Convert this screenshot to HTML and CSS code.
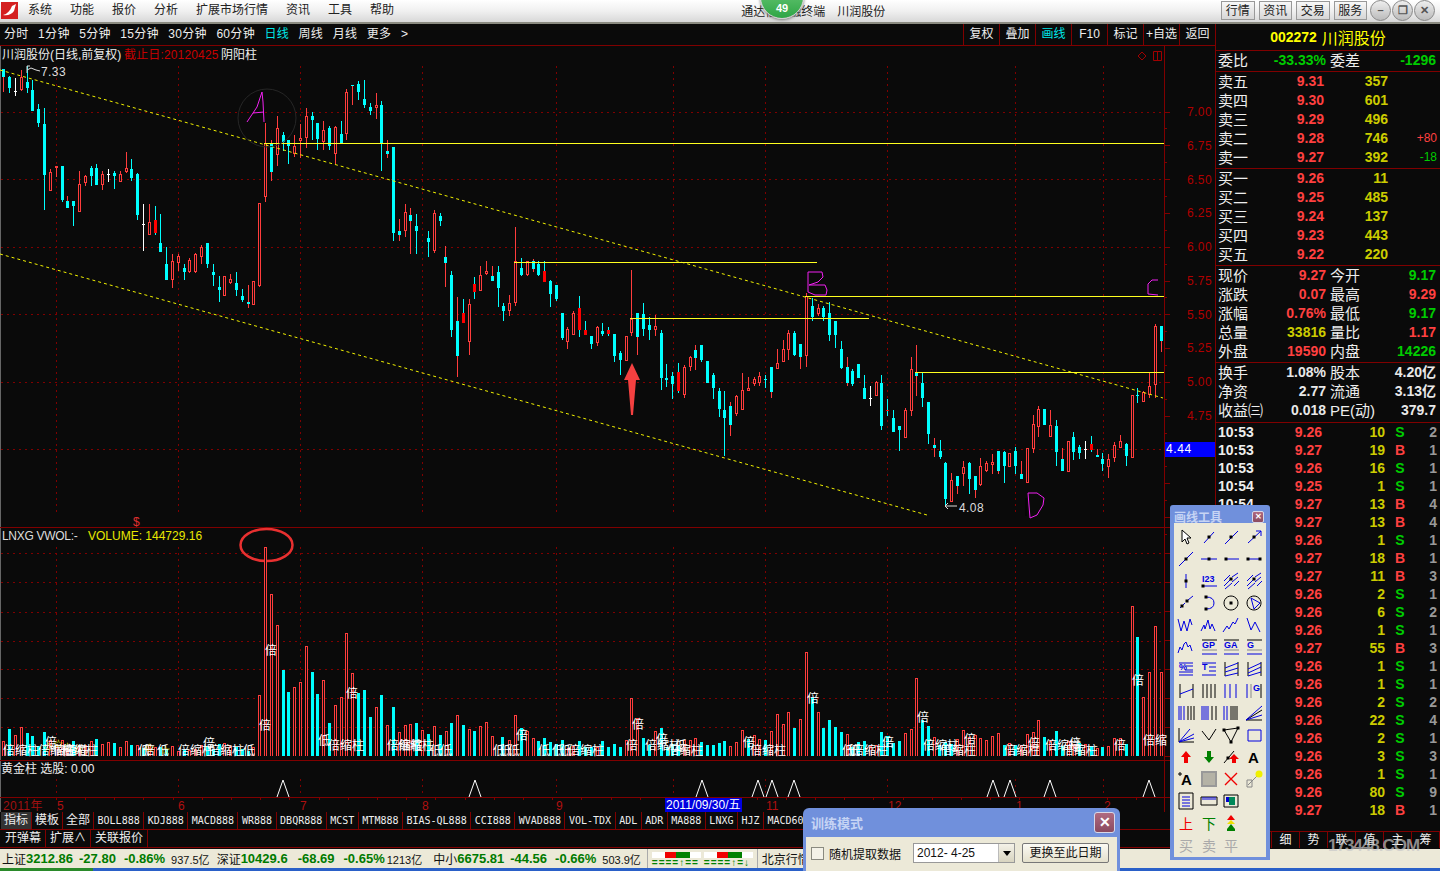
FILE: index.html
```html
<!DOCTYPE html>
<html lang="zh-CN">
<head>
    <meta charset="UTF-8">
    <title>通达信金融终端 川润股份</title>
    <link rel="stylesheet" href="styles.css">
</head>
<body>

    <!-- Title bar -->
    <div class="titlebar">
        <div class="logo"><svg width="17" height="17" viewBox="0 0 17 17"><rect width="17" height="17" fill="#d42020"/><path d="M2 13C6 12 9 9 11 4l4-2-2 7c-2 3-6 5-11 4z" fill="#fff"/></svg></div>
        <ul class="menu">
            <li>系统</li><li>功能</li><li>报价</li><li>分析</li><li>扩展市场行情</li><li>资讯</li><li>工具</li><li>帮助</li>
        </ul>
        <div class="app-title">通达信金融终端<span class="stock-name">川润股份</span></div>
        <div class="title-tabs">
            <span>行情</span><span>资讯</span><span>交易</span><span>服务</span>
        </div>
        <div class="win-btns">
            <span>&#8211;</span><span>&#10064;</span><span>&#10005;</span>
        </div>
    </div>
    <div class="badge">49</div>

    <div class="workspace">
        <!-- Chart column -->
        <div class="chart-col">
            <div class="toolbar">
                <div class="periods">
                    <span>分时</span><span>1分钟</span><span>5分钟</span><span>15分钟</span><span>30分钟</span><span>60分钟</span>
                    <span class="on">日线</span><span>周线</span><span>月线</span><span>更多</span><span>&gt;</span>
                </div>
                <div class="tool-cells">
                    <span>复权</span><span>叠加</span><span class="on">画线</span><span>F10</span><span>标记</span><span>+自选</span><span>返回</span>
                </div>
            </div>
            <svg id="plot" width="1215" height="766" viewBox="0 46 1215 766"></svg>
            <div class="tabs">
                <span class="cn active">指标</span><span class="cn">模板</span><span class="cn">全部</span><span>BOLL888</span><span>KDJ888</span><span>MACD888</span><span>WR888</span><span>DBQR888</span><span>MCST</span><span>MTM888</span><span>BIAS-QL888</span><span>CCI888</span><span>WVAD888</span><span>VOL-TDX</span><span>ADL</span><span>ADR</span><span>MA888</span><span>LNXG</span><span>HJZ</span><span>MACD60</span>
            </div>
            <div class="tabs">
                <span class="cn wide">开弹幕</span><span class="cn wide">扩展∧</span><span class="cn wide">关联报价</span>
            </div>
        </div>

        <!-- Quote panel -->
        <div class="quote-panel">
            <div class="q-head"><b>002272</b><span>川润股份</span></div>
            <div class="q-section ratio">
                <div class="q-row">
                    <div class="q-cell"><i>委比</i><span class="green">-33.33%</span></div>
                    <div class="q-cell"><i>委差</i><span class="green">-1296</span></div>
                </div>
            </div>
            <div class="q-section">
                <div class="book-row"><i>卖五</i><span class="red">9.31</span><span class="yellow">357</span><em></em></div>
                <div class="book-row"><i>卖四</i><span class="red">9.30</span><span class="yellow">601</span><em></em></div>
                <div class="book-row"><i>卖三</i><span class="red">9.29</span><span class="yellow">496</span><em></em></div>
                <div class="book-row"><i>卖二</i><span class="red">9.28</span><span class="yellow">746</span><em class="red">+80</em></div>
                <div class="book-row"><i>卖一</i><span class="red">9.27</span><span class="yellow">392</span><em class="green">-18</em></div>
            </div>
            <div class="q-section">
                <div class="book-row"><i>买一</i><span class="red">9.26</span><span class="yellow">11</span><em></em></div>
                <div class="book-row"><i>买二</i><span class="red">9.25</span><span class="yellow">485</span><em></em></div>
                <div class="book-row"><i>买三</i><span class="red">9.24</span><span class="yellow">137</span><em></em></div>
                <div class="book-row"><i>买四</i><span class="red">9.23</span><span class="yellow">443</span><em></em></div>
                <div class="book-row"><i>买五</i><span class="red">9.22</span><span class="yellow">220</span><em></em></div>
            </div>
            <div class="q-section">
                <div class="q-row">
                    <div class="q-cell"><i>现价</i><span class="red">9.27</span></div>
                    <div class="q-cell"><i>今开</i><span class="green">9.17</span></div>
                </div>
                <div class="q-row">
                    <div class="q-cell"><i>涨跌</i><span class="red">0.07</span></div>
                    <div class="q-cell"><i>最高</i><span class="red">9.29</span></div>
                </div>
                <div class="q-row">
                    <div class="q-cell"><i>涨幅</i><span class="red">0.76%</span></div>
                    <div class="q-cell"><i>最低</i><span class="green">9.17</span></div>
                </div>
                <div class="q-row">
                    <div class="q-cell"><i>总量</i><span class="yellow">33816</span></div>
                    <div class="q-cell"><i>量比</i><span class="red">1.17</span></div>
                </div>
                <div class="q-row">
                    <div class="q-cell"><i>外盘</i><span class="red">19590</span></div>
                    <div class="q-cell"><i>内盘</i><span class="green">14226</span></div>
                </div>
            </div>
            <div class="q-section finance">
                <div class="q-row">
                    <div class="q-cell"><i>换手</i><span>1.08%</span></div>
                    <div class="q-cell"><i>股本</i><span>4.20亿</span></div>
                </div>
                <div class="q-row">
                    <div class="q-cell"><i>净资</i><span>2.77</span></div>
                    <div class="q-cell"><i>流通</i><span>3.13亿</span></div>
                </div>
                <div class="q-row">
                    <div class="q-cell"><i>收益㈢</i><span>0.018</span></div>
                    <div class="q-cell"><i>PE(动)</i><span>379.7</span></div>
                </div>
            </div>
            <div class="ticks" id="ticks"></div>
            <div class="panel-tabs">
                <span>笔</span><span>价</span><span>细</span><span>势</span><span>联</span><span>值</span><span>主</span><span>筹</span>
            </div>
            <div class="watermark">173448.COM</div>
        </div>
    </div>

    <!-- Status bar -->
    <div class="statusbar">
        <span class="idx">上证</span><b class="first">3212.86</b><b>-27.80</b><b class="last">-0.86%</b><span class="amt">937.5亿</span>
        <span class="idx">深证</span><b class="first far">10429.6</b><b class="mid">-68.69</b><b class="near">-0.65%</b><span class="amt far">1213亿</span>
        <span class="idx">中小</span><b class="first">6675.81</b><b>-44.56</b><b class="last">-0.66%</b><span class="amt">503.9亿</span>
        <div class="mini-group">
            <div class="mini"><div class="mini-bar"><s class="mr"></s><s class="mg"></s></div><div class="mini-txt">====↑==</div></div>
            <div class="mini"><div class="mini-bar"><s class="mr"></s><s class="mg"></s></div><div class="mini-txt">====↑=↓</div></div>
        </div>
        <span class="market">北京行情</span>
    </div>
    <div class="taskstrip"></div>

    <!-- Floating drawing tools -->
    <div class="draw-tools">
        <div class="win-title"><span>画线工具</span><div class="win-close small">&#10005;</div></div>
        <div class="tool-grid" id="toolGrid"></div>
    </div>

    <!-- Training dialog -->
    <div class="train-dialog">
        <div class="win-title"><span>训练模式</span><div class="win-close">&#10005;</div></div>
        <div class="train-body">
            <div class="check"></div>
            <span class="check-label">随机提取数据</span>
            <div class="combo"><span>2012- 4-25</span><div class="combo-btn"></div></div>
            <div class="train-btn">更换至此日期</div>
        </div>
    </div>

    <script src="chart.js"></script>
</body>
</html>
```

FILE: styles.css
```css
/* General Styles */
* {
    margin: 0;
    padding: 0;
    box-sizing: border-box;
    font-family: "Liberation Sans", "Noto Sans CJK SC", sans-serif;
}

body {
    width: 1440px;
    height: 871px;
    overflow: hidden;
    background: #0a0a0a;
    color: #eee;
    font-size: 12px;
    position: relative;
}

/* Title bar */
.titlebar {
    height: 24px;
    display: flex;
    align-items: center;
    background: linear-gradient(#ffffff, #f0f0f0 50%, #d8d8d8);
    border-bottom: 2px solid #8a8a80;
    color: #222;
    padding-bottom: 2px;
}

.logo {
    width: 18px;
    margin-left: 1px;
    height: 17px;
}

.menu {
    list-style: none;
    display: flex;
}

.menu li {
    padding: 0 9px;
    line-height: 20px;
}

.app-title {
    margin-left: 338px;
    white-space: nowrap;
}

.stock-name {
    margin-left: 12px;
}

.title-tabs {
    display: flex;
    gap: 4px;
    margin-left: auto;
}

.title-tabs span {
    width: 33.5px;
    height: 19px;
    line-height: 18px;
    text-align: center;
    background: linear-gradient(#f8f8f8, #d6d6d6);
    border: 1px solid #999;
}

.win-btns {
    display: flex;
    gap: 1px;
    margin-left: 3px;
    margin-right: 5px;
}

.win-btns span {
    width: 21px;
    height: 21px;
    border-radius: 50%;
    border: 1px solid #888;
    background: linear-gradient(#eee, #bbb);
    text-align: center;
    line-height: 19px;
    font-size: 11px;
    font-weight: bold;
    color: #555;
}

.badge {
    position: absolute;
    left: 760px;
    top: -25px;
    width: 44px;
    height: 44px;
    border-radius: 50%;
    background: linear-gradient(#7fd487, #2ea545);
    border: 1px solid #cfcfcf;
    box-shadow: 0 1px 3px #777;
    color: #fff;
    font-weight: bold;
    font-size: 11px;
    text-align: center;
    padding-top: 25px;
    line-height: 14px;
}

.workspace {
    display: flex;
    height: 825px;
}

/* Chart */
.chart-col {
    width: 1215px;
}

.toolbar {
    height: 22px;
    display: flex;
    justify-content: space-between;
    border-bottom: 1px solid #800000;
}

.periods {
    display: flex;
    gap: 9.5px;
    padding-left: 4px;
    line-height: 20px;
    letter-spacing: 0.3px;
}

.on {
    color: #00e8e8;
}

.tool-cells {
    display: flex;
}

.tool-cells span {
    width: 36px;
    text-align: center;
    line-height: 20px;
    border-left: 1px solid #800000;
}

#plot {
    display: block;
}

#plot text {
    font-size: 12px;
}

.tabs {
    height: 18px;
    display: flex;
    padding-left: 1px;
    border-bottom: 1px solid #800000;
    overflow: hidden;
}

.tabs span {
    padding: 0 3.5px;
    border-right: 1px solid #800000;
    line-height: 17px;
    font-family: "DejaVu Sans Mono", monospace;
    font-size: 10px;
    white-space: nowrap;
}

.tabs .cn {
    font-family: "Liberation Sans", "Noto Sans CJK SC", sans-serif;
    font-size: 12px;
    padding: 0 3px;
}

.tabs .wide {
    padding: 0 4px;
}

.tabs .active {
    background: #333;
}

/* Quote panel */
.quote-panel {
    width: 225px;
    border-left: 1px solid #800000;
    position: relative;
    font-size: 14px;
    font-weight: bold;
}

.q-head {
    height: 27px;
    display: flex;
    justify-content: center;
    align-items: center;
    gap: 5px;
    color: #ffff00;
    border-bottom: 1px solid #800000;
}

.q-head span {
    font-size: 16px;
    font-weight: normal;
}

.q-section {
    padding-bottom: 1px;
    border-bottom: 1px solid #800000;
}

.finance {
    padding-bottom: 2px;
    color: #e8e8e8;
}

.q-row {
    display: flex;
    height: 19px;
    line-height: 19px;
}

.q-cell {
    width: 112px;
    display: flex;
    justify-content: space-between;
    padding: 0 2px;
}

.q-cell + .q-cell {
    padding-right: 4px;
}

i {
    font-style: normal;
    font-weight: normal;
    font-size: 15px;
    color: #eee;
    white-space: nowrap;
}

.book-row {
    display: grid;
    grid-template-columns: 34px 72px 64px 49px;
    height: 19px;
    line-height: 19px;
    padding-left: 2px;
}

.book-row span,
.book-row em {
    text-align: right;
}

.book-row em {
    font-style: normal;
    font-weight: normal;
    font-size: 12px;
}

.red {
    color: #ff4040;
}

.green {
    color: #00cc00;
}

.yellow {
    color: #cccc00;
}

.ticks {
    height: 408px;
}

.tick-row {
    display: grid;
    grid-template-columns: 48px 56px 63px 30px 22px;
    height: 18px;
    line-height: 18px;
    padding-left: 2px;
}

.tick-row span {
    text-align: right;
}

.tick-row .side {
    text-align: center;
}

.tick-row .count {
    color: #999;
}

.panel-tabs {
    display: flex;
    height: 17px;
    border-top: 1px solid #800000;
    font-size: 12px;
    font-weight: normal;
    line-height: 16px;
}

.panel-tabs span {
    width: 28px;
    text-align: center;
    border-right: 1px solid #800000;
}

.watermark {
    position: absolute;
    left: 112px;
    top: 812px;
    font-size: 17px;
    font-weight: bold;
    color: rgba(200, 200, 200, 0.7);
    letter-spacing: -1px;
}

/* Status bar */
.statusbar {
    height: 19px;
    background: #ece9d8;
    color: #111;
    display: flex;
    align-items: center;
    padding-left: 2px;
    white-space: nowrap;
    overflow: hidden;
}

.statusbar b {
    color: #007a00;
    font-size: 13px;
    margin-right: 8px;
}

.statusbar b.first {
    margin-right: 6px;
}

.statusbar b.last {
    margin-right: 6px;
}

.statusbar b.far {
    margin-right: 10px;
}

.statusbar b.mid {
    margin-right: 9px;
}

.statusbar b.near {
    margin-right: 2px;
}

.amt {
    font-size: 11px;
    margin-right: 7px;
}

.amt.far {
    margin-right: 11px;
}

.mini-group {
    display: flex;
    gap: 3px;
    margin-left: -1px;
    padding: 3px 4px 0;
    height: 19px;
    border-left: 1px solid #aaa;
    border-right: 1px solid #aaa;
}

.mini {
    width: 49px;
}

.mini-bar {
    height: 6px;
    display: flex;
    background: #fff;
    padding-left: 13px;
}

.mr {
    width: 11px;
    background: #f00000;
}

.mg {
    width: 14px;
    background: #008000;
}

.mini-txt {
    font-size: 10px;
    line-height: 9px;
    font-weight: bold;
    color: #008000;
    letter-spacing: 1px;
}

.market {
    margin-left: 4px;
}

.taskstrip {
    height: 3px;
    background: linear-gradient(90deg, #2a8a2a 93px, #2a60c8 93px);
}

/* Floating windows */
.win-title {
    display: flex;
    justify-content: space-between;
    align-items: center;
    color: #c6d4f4;
    font-weight: bold;
}

.win-close {
    width: 21px;
    height: 21px;
    background: linear-gradient(#b06a80, #8a4a60);
    border: 1px solid #d8d8e8;
    border-radius: 3px;
    color: #fff;
    font-size: 14px;
    line-height: 19px;
    text-align: center;
}

.win-close.small {
    width: 12px;
    height: 12px;
    font-size: 8px;
    line-height: 10px;
    border-radius: 2px;
}

.draw-tools {
    position: absolute;
    left: 1170px;
    top: 505px;
    width: 100px;
    height: 355px;
    background: #7090dc;
    padding: 0 4px 3px;
    border-radius: 3px 3px 0 0;
}

.draw-tools .win-title {
    height: 18px;
    padding: 5px 2px 0 0;
}

.tool-grid {
    height: 334px;
    background: #ece9d8;
    display: grid;
    grid-template-columns: repeat(4, 22.7px);
    grid-auto-rows: 22px;
    padding: 3px 0 0 1px;
}

.tool-grid svg {
    display: block;
    margin: 2px;
}

.tool-grid path {
    fill: none;
    stroke-width: 1;
}

.tool-grid text {
    font-size: 9px;
    font-weight: bold;
}

.tool-grid .k { stroke: #000; }
.tool-grid .b { stroke: #0000e0; }
.tool-grid .g { stroke: #888; }
.tool-grid .r { stroke: #f00000; stroke-width: 1.4; }
.tool-grid .sq { fill: #000; }
.tool-grid .wf { fill: #fff; stroke: #000; }
.tool-grid .rf { fill: #f00000; stroke: none; }
.tool-grid .gf { fill: #008000; stroke: none; }
.tool-grid .yf { fill: #f0e000; stroke: none; }

.train-dialog {
    position: absolute;
    left: 803px;
    top: 808px;
    width: 317px;
    height: 70px;
    background: #7090dc;
    padding: 0 3px;
    border-radius: 6px 6px 0 0;
}

.train-dialog .win-title {
    height: 29px;
    padding: 0 2px 0 5px;
    font-size: 13px;
}

.train-body {
    height: 40px;
    background: #ece9d8;
    color: #111;
    display: flex;
    align-items: flex-start;
    padding: 6px 0 0 5px;
}

.check {
    width: 13px;
    height: 13px;
    margin-top: 4px;
    background: #f4f2e8;
    border: 1px solid #8a8a80;
}

.check-label {
    margin: 2px 0 0 5px;
    width: 84px;
}

.combo {
    width: 102px;
    height: 20px;
    background: #fff;
    border: 1px solid #999;
    display: flex;
    justify-content: space-between;
    line-height: 18px;
    padding-left: 3px;
}

.combo-btn {
    width: 16px;
    background: linear-gradient(#f4f2e8, #d8d4c0);
    border-left: 1px solid #bbb;
    position: relative;
}

.combo-btn::after {
    content: "";
    position: absolute;
    left: 4px;
    top: 7px;
    border: 4px solid transparent;
    border-top: 5px solid #000;
}

.train-btn {
    width: 87px;
    height: 20px;
    margin-left: 7px;
    text-align: center;
    line-height: 18px;
    background: linear-gradient(#fbfaf4, #e4e0cc);
    border: 1px solid #777;
    border-radius: 2px;
}
```

FILE: chart.js
```js
const SVG_NS = "http://www.w3.org/2000/svg";
const plot = document.getElementById("plot");

const RED = "#ff3c3c";
const CYAN = "#00ffff";
const BG = "#0a0a0a";
const GRID = "#800000";

function add(tag, attrs, text) {
    const node = document.createElementNS(SVG_NS, tag);
    for (const key in attrs) node.setAttribute(key, attrs[key]);
    if (text !== undefined) node.textContent = text;
    plot.appendChild(node);
    return node;
}

function rect(x, y, w, h, fill) {
    add("rect", { x, y, width: w, height: h, fill, "shape-rendering": "crispEdges" });
}

function line(x1, y1, x2, y2, stroke, extra) {
    add("line", Object.assign({ x1, y1, x2, y2, stroke, "shape-rendering": "crispEdges" }, extra || {}));
}

function label(x, y, str, fill, extra) {
    add("text", Object.assign({ x, y, fill }, extra || {}), str);
}

// candles: [x, type, high, low, bodyTop, bodyBottom], read off in crop coordinates
const candleGroups = [
    { ox: 0, oy: 60, sx: 3, rows: [
        [10,"cr",27,98,27,52],[28,"c",50,100,52,86],[46,"w",55,108,95,95],[64,"r",30,95,52,90],[82,"c",20,100,66,86],
        [98,"c",60,155,90,155],[115,"c",132,203,148,191],[133,"c",145,450,192,347],[151,"r",327,395,337,395],[169,"r",318,352,318,326],
        [187,"c",318,428,318,420],[203,"cr",408,446,423,446],[221,"c",423,500,423,438],[239,"r",333,458,373,458],[257,"r",345,380,349,369],
        [275,"c",320,380,324,350],[289,"c",312,375,324,375],[307,"r",335,392,343,376],[325,"w",327,366,343,343],[343,"c",335,387,340,348],
        [361,"r",335,368,343,368],[379,"r",277,340,324,338],[394,"c",297,365,327,354],[412,"c",340,480,342,465],[430,"w",432,575,493,493],
        [448,"r",432,527,487,527],[466,"Rc",438,525,480,520],[481,"c",462,576,549,576],[499,"c",562,660,612,660],[517,"r",582,684,604,660],
        [535,"r",582,634,589,609],[553,"c",612,660,624,636],[568,"r",595,640,601,638],[586,"r",580,640,582,638],[604,"r",555,612,562,592],
        [622,"c",549,624,549,612],[640,"c",612,680,636,645],[658,"c",648,726,682,692],[673,"r",648,710,650,710],[691,"r",642,672,657,671],
        [709,"c",638,710,669,692],[727,"c",687,726,708,720],[745,"cr",675,744,726,732],[761,"r",663,735,663,735],[779,"r",430,683,430,678],
        [797,"r",190,428,250,413],[815,"cr",240,363,250,338],[832,"r",170,318,205,287],[850,"c",216,275,226,246],[865,"c",240,312,240,258],
        [883,"r",225,292,258,282],[901,"r",192,295,235,243],[919,"r",145,265,168,235],[937,"c",156,240,168,180],[952,"c",190,270,190,238],
        [970,"r",183,270,211,248],[988,"c",198,272,204,260],[1006,"r",200,312,202,282],[1024,"c",185,250,222,250],[1040,"r",87,240,97,224],
        [1057,"cr",75,135,75,80],[1075,"c",65,120,72,98],[1093,"c",60,145,117,135],[1111,"c",130,167,141,153],[1129,"r",99,177,136,146],
        [1144,"c",124,335,135,254],[1162,"cr",240,295,273,282],[1180,"c",261,543,261,519],[1198,"cr",477,543,513,525],[1216,"r",432,531,457,513],
        [1231,"cr",445,582,467,483],[1249,"c",462,582,498,513]
    ] },
    { ox: 420, oy: 220, sx: 3, rows: [
        [25,"c",33,113,54,68],[43,"r",-30,100,-20,93],[61,"c",-20,20,-10,5],[76,"cr",78,203,111,129],[94,"c",153,353,165,330],
        [112,"cr",232,473,303,410],[130,"Rc",237,310,279,309],[148,"r",237,407,252,368],[163,"Rc",171,237,192,216],[181,"r",138,215,166,215],
        [199,"r",123,165,155,162],[217,"cr",138,183,168,183],[235,"c",138,263,156,204],[250,"c",250,305,258,273],[268,"r",225,290,250,274],
        [286,"r",22,260,125,251],[304,"c",114,168,144,165],[322,"r",123,168,124,167],[340,"cr",117,157,123,147],[355,"c",125,170,132,165],
        [373,"Rc",123,186,153,186],[391,"c",180,263,183,222],[409,"c",195,245,195,237],[427,"c",279,360,279,355],[442,"r",322,387,328,368],
        [460,"r",274,345,280,345],[478,"Rc",228,353,264,332],[496,"Rc",303,347,330,345],[514,"c",348,387,348,372],[532,"r",318,378,322,370],
        [547,"c",310,350,333,342],[565,"Rc",322,348,330,342],[583,"c",342,428,342,408],[601,"c",395,465,400,420],[619,"r",348,423,349,423],
        [634,"r",150,350,297,341],[652,"cr",280,405,280,351],[670,"c",250,348,282,327],[688,"c",292,362,315,330],[706,"r",285,348,319,330],
        [724,"c",331,510,339,474],[739,"c",432,503,474,480],[757,"c",457,537,468,492],[775,"Rc",430,520,457,514],[793,"r",435,534,441,525],
        [811,"r",410,453,412,443],[826,"cr",375,450,390,414],[844,"c",375,428,375,420],[862,"c",423,489,423,489],[880,"c",460,537,465,504],
        [898,"c",505,592,513,567],[913,"c",513,710,570,594],[931,"cr",547,648,558,615],[949,"r",525,590,528,582],[967,"r",460,572,511,572],
        [985,"r",472,515,505,513],[1003,"r",472,500,477,492],[1018,"r",457,500,468,489],[1036,"c",465,505,478,480],[1054,"cr",441,534,441,516],
        [1072,"r",388,447,430,447],[1090,"r",360,426,388,426],[1105,"r",330,420,339,390],[1123,"c",333,408,339,405],[1141,"cr",372,447,372,411]
    ] },
    { ox: 800, oy: 270, sx: 3, rows: [
        [19,"r",70,291,80,260],[37,"c",85,155,108,141],[55,"r",102,140,114,132],[70,"c",108,155,114,141],[88,"c",97,215,129,197],
        [106,"c",153,236,153,197],[124,"c",213,297,237,294],[142,"cr",261,350,291,339],[157,"c",297,350,303,342],[175,"c",282,324,282,324],
        [193,"c",315,387,354,387],[211,"w",350,410,385,385],[229,"r",333,378,336,378],[244,"c",315,480,339,468],[262,"Rc",387,440,420,425],
        [280,"c",420,486,444,486],[298,"c",468,543,468,480],[316,"r",415,504,420,504],[334,"r",262,440,297,423],[349,"cr",225,378,306,318],
        [367,"c",310,411,339,384],[385,"c",396,522,396,492],[403,"cr",504,561,525,534],[421,"c",510,567,543,561],[436,"c",578,705,579,687],
        [454,"r",610,698,630,698],[472,"cr",618,672,618,648],[490,"r",573,648,591,614],[508,"c",576,672,579,627],[526,"cr",618,684,618,660],
        [541,"r",565,648,588,647],[559,"r",573,606,579,605],[577,"r",552,612,576,585],[595,"cr",543,612,543,603],[613,"c",543,639,546,588],
        [628,"r",549,591,549,591],[646,"c",531,612,543,588],[664,"cr",573,627,612,627],[682,"r",534,639,534,639],[700,"r",435,549,462,537],
        [715,"r",408,501,417,471],[733,"c",417,465,417,465],[751,"r",420,501,465,501],[769,"c",450,588,468,546],[787,"cr",534,603,567,603],
        [805,"r",513,606,513,606],[820,"c",486,570,501,546],[838,"c",525,567,531,549],[856,"w",513,567,538,538],[874,"Rc",498,546,522,540],
        [892,"cr",537,561,555,561],[907,"c",549,603,567,582],[925,"r",552,624,567,591],[943,"r",516,576,525,564],[961,"r",495,534,513,534],
        [979,"c",519,588,522,558],[997,"r",375,564,375,564],[1012,"c",354,399,375,378],[1030,"r",363,396,366,396],[1048,"r",309,384,348,375],
        [1066,"r",162,384,168,345],[1084,"cr",168,246,168,213]
    ] }
];

// volume: [x, type, top]
const volumeGroups = [
    { ox: 0, oy: 525, sx: 3, base: 695, rows: [
        [10,"r",648],[28,"c",612],[46,"r",630],[64,"r",606],[82,"c",624],[97,"c",633],[115,"c",663],[133,"c",621],[151,"r",645],[169,"r",660],
        [187,"r",645],[203,"r",675],[221,"c",648],[239,"r",660],[257,"r",660],[275,"r",648],[289,"c",642],[307,"r",657],[325,"r",651],[343,"c",654],
        [361,"r",666],[379,"r",648],[394,"c",660],[412,"r",660],[430,"c",670],[448,"r",660],[466,"r",668],[481,"c",668],[499,"c",672],[517,"r",663],
        [535,"r",678],[553,"c",672],[568,"r",675],[586,"r",672],[604,"r",660],[622,"c",665],[640,"c",672],[658,"c",657],[673,"r",654],[691,"r",663],
        [709,"c",666],[727,"c",672],[745,"c",678],[761,"r",666],[779,"r",510],[797,"r",66],[815,"r",207],[832,"r",300],[850,"c",435],[865,"c",501],
        [883,"r",486],[901,"r",471],[919,"r",363],[937,"c",441],[952,"c",507],[970,"r",465],[988,"c",594],[1006,"r",540],[1024,"r",516],[1040,"r",324],
        [1057,"r",444],[1075,"c",504],[1093,"c",495],[1111,"c",576],[1129,"r",546],[1144,"c",510],[1162,"r",600],[1180,"c",546],[1198,"r",622],[1216,"r",600],
        [1231,"r",597],[1249,"c",594],[1267,"r",615],[1285,"c",627],[1303,"r",603],[1321,"c",630],[1339,"r",618],[1354,"c",594],[1372,"r",570],[1390,"c",600],
        [1408,"r",612],[1423,"c",618],[1441,"r",603],[1459,"r",591],[1477,"r",633]
    ] },
    { ox: 500, oy: 590, sx: 2.34, base: 500, rows: [
        [5,"c",441],[22,"r",450],[36,"r",375],[50,"c",415],[64,"r",423],[78,"r",444],[90,"c",453],[104,"c",444],[118,"c",456],[132,"c",462],
        [146,"c",450],[160,"r",475],[172,"r",468],[186,"c",453],[200,"c",471],[214,"c",471],[228,"r",471],[240,"c",453],[253,"c",471],[267,"c",462],
        [281,"c",471],[296,"r",450],[307,"r",324],[321,"r",384],[335,"c",444],[349,"c",465],[363,"r",423],[377,"c",414],[391,"c",471],[403,"c",462],
        [417,"c",465],[431,"r",450],[445,"r",450],[458,"r",444],[471,"c",456],[485,"c",465],[499,"c",465],[513,"c",459],[525,"c",453],[539,"r",468],
        [553,"r",456],[567,"r",420],[581,"c",447],[595,"r",435],[607,"r",447],[621,"c",450],[635,"r",423],[649,"r",372],[663,"r",402],[675,"r",366],
        [689,"c",414],[703,"r",387],[717,"r",186],[731,"c",321],[745,"r",366],[757,"c",414],[771,"c",390],[785,"c",411],[799,"c",426],[813,"r",432],
        [825,"c",471],[839,"c",456],[853,"c",453],[867,"r",468],[881,"r",465],[893,"c",426],[907,"c",438],[921,"c",459],[935,"c",453],[949,"r",429],
        [963,"r",417],[975,"r",264],[989,"c",390],[1003,"c",408],[1017,"r",441],[1029,"c",465],[1043,"c",456],[1057,"c",462],[1071,"r",447],[1085,"r",420],
        [1099,"r",441],[1113,"r",435],[1125,"r",444],[1139,"r",450],[1153,"r",438],[1167,"r",429],[1181,"c",465],[1193,"r",459],[1207,"c",465],[1221,"r",465],
        [1235,"r",432],[1249,"r",426],[1261,"r",390],[1275,"c",441],[1289,"r",453],[1303,"c",423],[1317,"c",468],[1331,"r",453],[1345,"r",462],[1357,"c",459],
        [1371,"r",462],[1385,"c",468],[1399,"r",474],[1411,"c",471],[1425,"r",468],[1439,"r",444],[1453,"r",444],[1467,"c",462],[1481,"r",48],[1492,"c",141],
        [1506,"r",321],[1520,"r",246],[1534,"r",108],[1548,"r",246]
    ] }
];

// white text marks scattered over the volume bars: [x, baseline, text]
const volumeMarks = [
    [3,755,"倍缩柱"],[38,755,"倍缩柱"],[53,755,"倍缩柱"],[62,755,"倍缩柱"],[45,747,"倍"],[138,755,"低"],[143,755,"倍"],[157,755,"低"],
    [178,755,"倍缩柱"],[203,748,"倍"],[208,755,"倍缩柱"],[243,755,"低"],[259,730,"倍"],[265,655,"倍"],[346,698,"倍"],[318,745,"低"],
    [328,750,"倍缩柱"],[387,750,"倍缩柱"],[398,750,"倍缩柱"],[430,755,"低"],[440,755,"低"],[493,755,"低"],[500,755,"低"],[508,755,"低"],
    [516,740,"倍"],[538,755,"低"],[552,755,"低"],[560,755,"低"],[568,755,"倍缩柱"],[626,750,"倍"],[632,729,"倍"],[645,750,"倍缩柱"],
    [656,744,"倍"],[667,755,"倍缩柱"],[675,750,"低"],[743,747,"倍"],[750,755,"倍缩柱"],[807,703,"倍"],[842,755,"低"],[848,755,"低"],
    [852,755,"倍缩柱"],[882,747,"倍"],[917,722,"倍"],[923,750,"倍缩柱"],[940,755,"倍缩柱"],[964,744,"倍"],[1004,755,"倍缩柱"],[1028,748,"倍"],
    [1045,750,"倍缩柱"],[1062,755,"倍缩柱"],[1069,748,"倍"],[1114,750,"倍"],[1132,685,"倍"],[1143,745,"倍缩"]
];

const stars = [[43,751],[53,748],[62,751],[73,753],[144,752],[160,754]];
const months = [[57,"5"],[178,"6"],[300,"7"],[422,"8"],[556,"9"],[766,"11"],[888,"12"],[1016,"1"],[1104,"2"]];
const gridX = [56,178,300,422,556,673,765,887,1015,1103];
const peaks = [283,475,702,758,772,794,993,1010,1050,1149];

function drawGrid() {
    rect(0, 46, 1, 766, "#666");
    const dots = { "stroke-dasharray": "2 4" };
    [112,179,247,314,382,449,553,582,612,641,669,698,727].forEach(y => line(1, y, 1164, y, GRID, dots));
    gridX.forEach(x => {
        line(x, 66, x, 515, GRID, dots);
        line(x, 547, x, 755, GRID, dots);
        line(x, 779, x, 797, GRID, dots);
    });
    line(0, 527, 1215, 527, GRID);
    line(0, 760, 1215, 760, GRID);
    line(0, 797, 1215, 797, GRID);
    line(1164, 46, 1164, 812, GRID);

    for (let i = 0; i < 26; i++) {
        const y = 112 + i * 16.9;
        line(1164, y, i % 2 ? 1167 : 1170, y, GRID);
    }
    for (let i = 0; i < 8; i++) {
        const y = 553 + i * 29;
        line(1164, y, 1170, y, GRID);
    }
    for (let x = 27; x < 1164; x += 29.2) line(x, 797, x, 800, GRID);

    const prices = ["7.00","6.75","6.50","6.25","6.00","5.75","5.50","5.25","5.00","4.75"];
    prices.forEach((p, i) => label(1212, 116 + i * 33.75, p, "#b00000", { "text-anchor": "end", "letter-spacing": "0.4" }));
    rect(1165, 442, 50, 15, "#0000ff");
    label(1166, 453, "4.44", "#fff", { "letter-spacing": "0.6" });
}

function drawCandles() {
    candleGroups.forEach(g => g.rows.forEach(row => {
        const [zx, type, hi, lo, top, bot] = row;
        const x = Math.floor(g.ox + zx / g.sx);
        const y = z => Math.floor(g.oy + z / 3);
        const bodyH = Math.max(y(bot) - y(top), 1);
        const wick = type === "r" || type === "cr" ? RED : type === "w" ? "#fff" : CYAN;
        rect(x, y(hi), 1, y(lo) - y(hi), wick);
        if (type === "c" || type === "cr") {
            rect(x - 1, y(top), 3, bodyH, CYAN);
        } else if (type === "Rc") {
            rect(x - 1, y(top), 3, bodyH, "#ff0000");
        } else if (type === "w") {
            rect(x - 1, y(top), 3, 1, "#fff");
        } else {
            rect(x - 1, y(top), 3, bodyH, RED);
            if (bodyH > 2) rect(x, y(top) + 1, 1, bodyH - 2, BG);
        }
    }));
}

function drawTrendLines() {
    const dash = { "stroke-dasharray": "3 3", "stroke-width": 1 };
    add("line", Object.assign({ x1: 0, y1: 70, x2: 1163, y2: 398, stroke: "#f0f000" }, dash));
    add("line", Object.assign({ x1: 0, y1: 254, x2: 927, y2: 515, stroke: "#f0f000" }, dash));
    [[264,1164,143],[514,817,262],[630,869,318],[805,1164,296],[915,1164,372]].forEach(s => {
        line(s[0], s[2], s[1], s[2], "#ffff20");
    });
}

function drawMarks() {
    // hand drawn letters
    add("circle", { cx: 267, cy: 118, r: 29, fill: "none", stroke: "#262626" });
    const pen = { fill: "none", stroke: "#f020f0", "stroke-width": 1 };
    add("path", Object.assign({ d: "M247 122L257 107L262 92L263 102L264 122M253 113L264 112" }, pen));
    add("path", Object.assign({ d: "M808 272H822L823 277L818 282L809 285L825 285L827 290L826 295H815L808 292Z" }, pen));
    add("path", Object.assign({ d: "M1158 280H1152L1148 284V294L1158 295" }, pen));
    add("path", Object.assign({ d: "M1028 493H1037L1044 498L1043 505L1037 515L1030 518Z" }, pen));
    add("path", { d: "M1026 498V516", stroke: "#000", fill: "none" });

    // high and low tags
    add("path", { d: "M27 73V66H30M27 70L31 68L36 70L40 71", fill: "none", stroke: "#ddd" });
    label(41, 76, "7.33", "#ddd", { "letter-spacing": "0.4" });
    add("path", { d: "M957 506H945M948 503L945 506L948 509", fill: "none", stroke: "#ddd" });
    label(959, 512, "4.08", "#ddd", { "letter-spacing": "0.4" });

    // big red arrow
    add("path", { d: "M632 363L640 380H636L633 415H631L628 380H624Z", fill: "#f44040" });
    add("ellipse", { cx: 266.5, cy: 545, rx: 26, ry: 16, fill: "none", stroke: "#e83030", "stroke-width": 2.5 });
    label(133, 526, "$", "#e03030");
}

function drawVolume() {
    volumeGroups.forEach(g => g.rows.forEach(row => {
        const [zx, type, top] = row;
        const x = Math.floor(g.ox + zx / g.sx);
        const y = Math.floor(g.oy + top / 3);
        const base = Math.floor(g.oy + g.base / 3);
        if (type === "c") {
            rect(x - 1, y, 3, base - y, CYAN);
        } else {
            rect(x - 1, y, 3, base - y, RED);
            rect(x, y + 1, 1, base - y - 1, BG);
        }
    }));
    stars.forEach(s => label(s[0], s[1], "☆", "#ffff00", { style: "font-family:'DejaVu Sans'" }));
    volumeMarks.forEach(m => label(m[0], m[1], m[2], "#fff"));
}

function drawLabels() {
    add("text", { x: 2, y: 59, fill: "#eee" }, "川润股份(日线,前复权)");
    label(124, 59, "截止日:20120425", "#c80000", { "letter-spacing": "0.15" });
    label(221, 59, "阴阳柱", "#eee");
    add("path", { d: "M1142 52L1146 56L1142 60L1138 56Z", fill: "none", stroke: "#a00000" });
    add("path", { d: "M1153.5 51.5H1161.5V60.5H1153.5ZM1157.5 51.5V60.5", fill: "none", stroke: "#a00000" });

    label(2, 540, "LNXG VWOL:-", "#ddd", { "letter-spacing": "-0.3" });
    label(88, 540, "VOLUME: 144729.16", "#e8e800");
    label(1, 773, "黄金柱 选股: 0.00", "#eee");

    peaks.forEach(x => add("path", { d: `M${x - 6} 797L${x} 780L${x + 6} 797`, fill: "none", stroke: "#fff" }));

    label(3, 810, "2011年", "#a01010", { "letter-spacing": "0.4" });
    months.forEach(m => label(m[0], 810, m[1], "#b01010"));
    rect(665, 798, 77, 14, "#0000e0");
    label(666, 809, "2011/09/30/五", "#fff");
}

drawGrid();
drawCandles();
drawTrendLines();
drawMarks();
drawVolume();
drawLabels();

// tick list
const ticks = [
    ["10:53","9.26",10,"S",2],["10:53","9.27",19,"B",1],["10:53","9.26",16,"S",1],["10:54","9.25",1,"S",1],["10:54","9.27",13,"B",4],
    ["10:54","9.27",13,"B",4],["10:54","9.26",1,"S",1],["10:54","9.27",18,"B",1],["10:54","9.27",11,"B",3],["10:54","9.26",2,"S",1],
    ["10:54","9.26",6,"S",2],["10:55","9.26",1,"S",1],["10:55","9.27",55,"B",3],["10:55","9.26",1,"S",1],["10:55","9.26",1,"S",1],
    ["10:55","9.26",2,"S",2],["10:55","9.26",22,"S",4],["10:55","9.26",2,"S",1],["10:56","9.26",3,"S",3],["10:56","9.26",1,"S",1],
    ["10:56","9.26",80,"S",9],["10:56","9.27",18,"B",1]
];
document.getElementById("ticks").innerHTML = ticks.map(t => `<div class="tick-row">
    <b>${t[0]}</b><span class="red">${t[1]}</span><span class="yellow">${t[2]}</span>
    <span class="side ${t[3] === "S" ? "green" : "red"}">${t[3]}</span><span class="count">${t[4]}</span>
</div>`).join("");

// drawing tool icons, 18x18 box
const P = (c, d) => `<path class="${c}" d="${d}"/>`;
const S = (x, y) => `<rect class="sq" x="${x - 1.5}" y="${y - 1.5}" width="3" height="3"/>`;
const T = (x, y, str, fill) => `<text x="${x}" y="${y}" fill="${fill}">${str}</text>`;
const CN = (str, fill) => `<text x="2" y="15" fill="${fill}" style="font-size:14px;font-weight:normal">${str}</text>`;
const pairs = "M2 9L8 3M10 5L16 1M2 14L8 8M10 10L16 5M3 17L10 11M12 14L17 9";
const icons = [
    `<path class="wf" d="M5 2V14L8 11L10 16L12 15L10 10H14Z"/>`, P("b","M4 15L14 4") + S(9,9), P("b","M3 16L16 3") + S(9,9), P("b","M3 15L16 3M11 3H16V8") + S(9,9),
    P("b","M2 16L16 2") + S(9,9), P("b","M1 9H17") + S(9,9), P("b","M3 9H17") + S(4,9), P("b","M3 9H15") + S(3,9) + S(15,9),
    P("b","M9 2V16") + S(9,9), T(2,10,"I23","#0000e0") + P("b","M3 14H17") + S(3,14), P("b",pairs) + S(9,7), P("b",pairs) + S(9,7),
    P("b","M3 14L8 9M11 6L16 2") + S(5,12) + S(10,7), P("b","M6 3Q14 3 14 9T6 15") + S(6,3) + S(6,15), P("k","M9 2A7 7 0 1 0 9.01 2") + S(9,9), P("k","M9 2A7 7 0 1 0 9.01 2") + P("b","M6 4L15 9L9 15Z"),
    P("b","M1 3L4 15L7 5L10 15L13 3L15 9"), P("b","M1 15L4 9L5 13L8 4L10 13L12 8L15 15"), P("b","M1 16L5 10L7 13L11 6L13 8L16 2"), P("b","M2 2L6 14L10 6L15 16"),
    P("b","M1 15L3 9L5 12L7 6L9 4L11 9L13 7L15 13"), P("k","M2 2H17") + T(2,10,"GP","#0000e0") + P("b","M2 16H17") + P("g","M2 12H17"), P("k","M2 2H17") + T(2,10,"GA","#0000e0") + P("b","M2 16H17") + P("g","M2 12H17"), P("k","M2 2H17") + T(2,10,"G","#0000e0") + P("g","M2 12H17") + P("b","M2 16H17"),
    P("b","M2 3H16M8 6H16M8 10H16M2 15H16M2 12H16") + T(2,10,"%","#0000e0"), P("b","M2 3H16M9 7H16M9 11H16M2 15H16") + T(2,10,"T","#0000e0"), P("k","M3 2V16M16 2V16") + P("b","M3 8L16 3M3 12L16 8M3 16L16 13"), P("k","M3 2V16M16 2V16") + P("b","M3 9L16 3M3 13L16 7M3 16L16 12"),
    P("k","M3 2V16M16 2V16") + P("b","M3 12L16 7"), P("k","M3 2V16M7 2V16M11 2V16M15 2V16"), P("b","M3 2V16M8 2V16M14 2V16"), P("b","M2 2V16") + P("g","M6 2V16") + P("k","M16 2V16") + T(8,9,"G","#0000e0"),
    P("b","M2 2V16M4 2V16M7 2V16") + P("k","M11 2V16M14 2V16M17 2V16"), P("b","M2 2V16M4 2V16M6 2V16M8 2V16") + P("k","M12 2V16M16 2V16"), P("b","M2 2V16M5 2V16") + P("k","M9 2V16M11 2V16M13 2V16M15 2V16"), P("k","M1 16L17 6M1 16H17") + P("b","M1 16L17 2M1 16L17 11"),
    P("k","M2 2V16H17") + P("b","M2 16L13 3M2 16L17 8M2 16L17 12"), P("k","M2 5L9 14L16 3") , P("k","M2 4L16 2L9 16Z") + S(2,4) + S(16,2) + S(9,16), P("b","M3 4H16V15H3Z"),
    `<path class="rf" d="M9 3L14 9H11V15H7V9H4Z"/>`, `<path class="gf" d="M7 3H11V9H14L9 15L4 9H7Z"/>`, P("k","M2 15L12 3") + `<path class="rf" d="M12 6L17 11H14V15H10V11H7Z"/>` + S(6,10), T(3,15,"A","#000").replace("<text", '<text style="font-size:15px"'),
    T(4,15,"A","#000").replace("<text", '<text style="font-size:15px"') + P("k","M3 2V6M1 4H5"), `<rect x="2" y="2" width="14" height="14" fill="#b4b2a6" stroke="#999" stroke-width="2"/>`, P("r","M3 3L15 15M15 3L3 15"), P("g","M2 10H7V17H2ZM3 15L14 4") + `<circle cx="14" cy="4" r="3.5" fill="#f0f000"/>`,
    P("k","M2 1H16V17H2Z") + P("b","M5 5H13M5 8H13M5 11H13M5 14H13"), P("k","M1 5H17V13H1Z") + P("b","M3 5V8M5 5V8M7 5V8M9 5V8M11 5V8M13 5V8M15 5V8"), P("k","M2 3H16V15H2Z") + `<rect x="7" y="5" width="6" height="8" fill="#008858"/>` + `<rect x="4" y="5" width="3" height="5" fill="#0000d0"/>`, "",
    CN("上","#f00000"), CN("下","#008000"), `<path class="rf" d="M9 1L13 6H5Z"/><path class="yf" d="M9 6L13 10H5Z"/><path class="gf" d="M9 10L13 15H5Z"/><rect x="5" y="15" width="8" height="2" fill="#008000"/>`, "",
    CN("买","#aaa"), CN("卖","#aaa"), CN("平","#aaa"), ""
];
document.getElementById("toolGrid").innerHTML = icons
    .map(inner => `<div><svg width="18" height="18" viewBox="0 0 18 18">${inner}</svg></div>`)
    .join("");
```
